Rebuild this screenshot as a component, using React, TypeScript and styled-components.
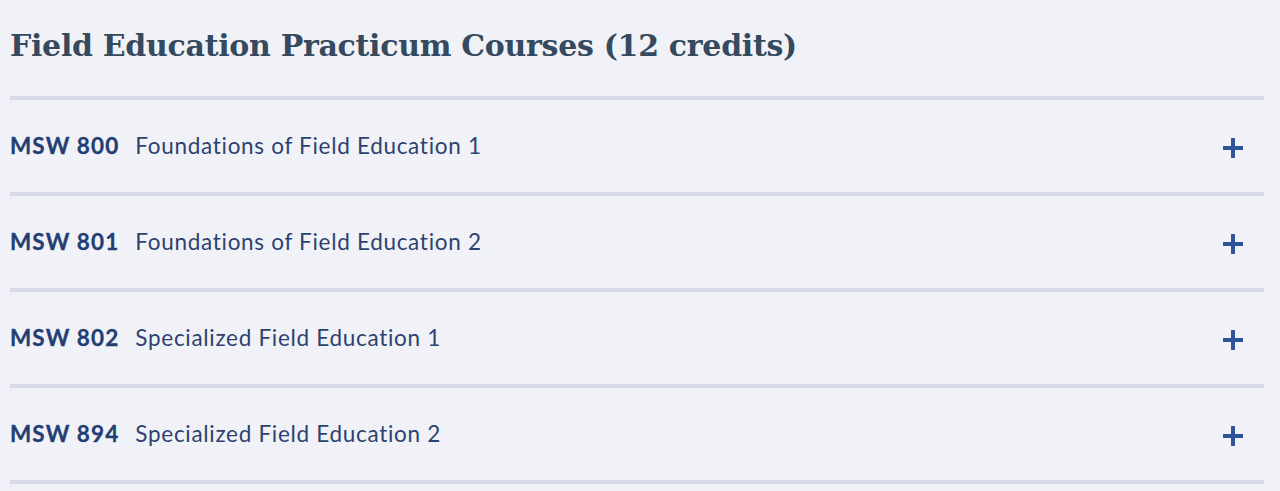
import React from "react";
import styled, { createGlobalStyle } from "styled-components";

const Global = createGlobalStyle`
  html, body { margin: 0; padding: 0; background: #f1f2f7; }
  body { font-family: "Lato", "Open Sans", sans-serif; }
`;

const Page = styled.div`
  padding: 0 16px 0 10px;
  background: #f1f2f7;
  min-height: 491px;
  box-sizing: border-box;
`;

const Title = styled.h2`
  margin: 0;
  height: 96px;
  padding-top: 26px;
  box-sizing: border-box;
  font-family: "DejaVu Serif", serif;
  font-weight: 700;
  font-size: 30px;
  line-height: 40px;
  color: #35495f;
  letter-spacing: -0.3px;
`;

const List = styled.div`
  display: flex;
  flex-direction: column;
  border-bottom: 4px solid #d9dae8;
`;

const Row = styled.div`
  height: 96px;
  box-sizing: border-box;
  border-top: 4px solid #d9dae8;
  display: flex;
  align-items: center;
  padding-bottom: 1px;
  font-variant-ligatures: none;
`;

const Code = styled.span`
  font-weight: 700;
  font-size: 22.5px;
  letter-spacing: 1.1px;
  color: #233e73;
  margin-right: 16px;
  -webkit-text-stroke: 0.3px #233e73;
`;

const Name = styled.span`
  font-weight: 400;
  font-size: 22.5px;
  letter-spacing: 0.7px;
  color: #2c4271;
  flex: 1;
`;

const Toggle = styled.button`
  border: none;
  background: none;
  padding: 0;
  margin-right: 21px;
  margin-top: 4px;
  width: 20px;
  height: 20px;
  display: flex;
  cursor: pointer;
`;

const Plus = () => (
  <svg width="20" height="20" viewBox="0 0 20 20">
    <path d="M10 1v18M1 10h18" stroke="#2b5597" strokeWidth="4" strokeLinecap="round" />
  </svg>
);

const courses = [
  ["MSW 800", "Foundations of Field Education 1"],
  ["MSW 801", "Foundations of Field Education 2"],
  ["MSW 802", "Specialized Field Education 1"],
  ["MSW 894", "Specialized Field Education 2"],
];

export default function App() {
  return (
    <Page>
      <Global />
      <Title>Field Education Practicum Courses (12 credits)</Title>
      <List>
        {courses.map(([c, n]) => (
          <Row key={c}>
            <Code>{c}</Code>
            <Name>{n}</Name>
            <Toggle aria-label="Expand">
              <Plus />
            </Toggle>
          </Row>
        ))}
      </List>
    </Page>
  );
}
